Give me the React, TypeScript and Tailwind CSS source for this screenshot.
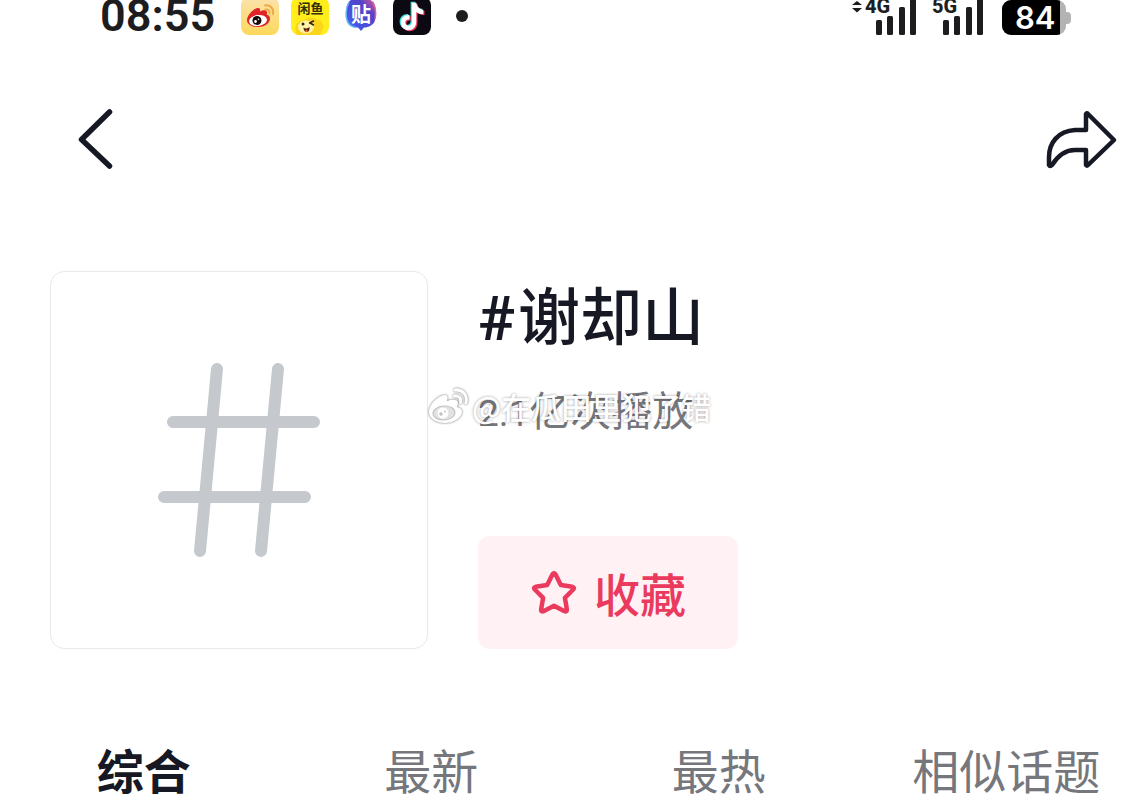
import React, { useState } from "react";

function WeiboIcon() {
  return (
    <svg viewBox="0 0 38 38" className="h-[38px] w-[38px]" aria-hidden="true">
      <defs>
        <linearGradient id="wb" x1="0" y1="0" x2="0" y2="1">
          <stop offset="0" stopColor="#fbe3ac" />
          <stop offset="1" stopColor="#fdd85a" />
        </linearGradient>
      </defs>
      <rect width="38" height="38" rx="8" fill="url(#wb)" />
      <path d="M6 23c0-5 7-12 11-12 2 0 2.500 1.500 2 3.500 3-1.500 7-2 7 1 0 1-.3 1.600-.3 2 2 .6 3.300 2 3.300 4 0 5-6 8.500-12 8.500S6 27.500 6 23z" fill="#e0232b" />
      <ellipse cx="17" cy="23.500" rx="9" ry="5.500" fill="#fff" transform="rotate(-8 17 23.500)" />
      <circle cx="16" cy="23.500" r="4.500" fill="#15090a" />
      <circle cx="14.500" cy="24.500" r="1.400" fill="#fff" />
      <circle cx="17.500" cy="22.300" r=".8" fill="#fff" />
      <path d="M24 8.500c5-1 9 3 8 8.500M24.500 12.500c3-.5 4.500 1.500 4 4" fill="none" stroke="#efa944" strokeWidth="2" strokeLinecap="round" />
    </svg>
  );
}

function XianyuIcon() {
  return (
    <svg viewBox="0 0 38 38" className="h-[38px] w-[38px]" aria-hidden="true">
      <rect width="38" height="38" rx="8" fill="#ffed1c" />
      <path d="M6 38c-4-8 0-15 7-15 4-3 10-3 13 0 5 0 7 5 6 8l-3 7z" fill="#fbd51c" />
      <ellipse cx="15" cy="30" rx="8" ry="6.500" fill="#fff4a8" />
      <text x="19.500" y="15.500" textAnchor="middle" fontSize="13" fontWeight="700" fill="#353008" fontFamily="'Noto Sans CJK SC', sans-serif">闲鱼</text>
      <circle cx="12" cy="27" r="1.500" fill="#302410" />
      <path d="M18.500 26l4-2M19 26l3.500 2" stroke="#302410" strokeWidth="1.500" strokeLinecap="round" />
      <path d="M12.500 30.500c2 1.500 4.500 1 6-.5.500 3-.8 5-2.800 5s-3.200-2-3.200-4.500z" fill="#53200d" />
      <circle cx="15.500" cy="34" r="1.200" fill="#f0632d" />
    </svg>
  );
}

function TiebaIcon() {
  return (
    <svg viewBox="0 0 32 38" className="h-[38px] w-[32px]" aria-hidden="true">
      <defs>
        <linearGradient id="tb" x1="0" y1="1" x2="1" y2="0">
          <stop offset="0" stopColor="#3ba4ff" />
          <stop offset=".25" stopColor="#4656e6" />
          <stop offset=".7" stopColor="#5242c8" />
          <stop offset="1" stopColor="#ed5b91" />
        </linearGradient>
      </defs>
      <path d="M9 2h13q8 1 8.500 10v9q-1 8-9.500 9.500h-2L16 34l-3-3.500h-2Q2 29 1.500 21v-9Q2 3 9 2z" fill="url(#tb)" />
      <path d="M4 5Q0 12 1.500 21q1 8 9 9.500" fill="none" stroke="#65b8ef" strokeWidth="1.500" />
      <path d="M28 5q4 8 2 17" fill="none" stroke="#e05fa0" strokeWidth="1.500" />
      <text x="16" y="25" textAnchor="middle" fontSize="20" fontWeight="700" fill="#fff" fontFamily="'Noto Sans CJK SC', sans-serif">贴</text>
    </svg>
  );
}

function DouyinIcon() {
  const note = "M18 5h4.500c.5 4 3 6.500 7 7v4.500c-2.700 0-5-.8-7-2.200V24c0 5-3.500 8.500-8 8.500S7 29 7 24.800c0-5 4-8 8.700-7.600v4.700c-2.500-.5-4.200.8-4.200 2.900 0 1.800 1.400 3.200 3.100 3.200 2 0 3.400-1.400 3.400-3.700z";
  return (
    <svg viewBox="0 0 38 38" className="h-[38px] w-[38px]" aria-hidden="true">
      <rect width="38" height="38" rx="8" fill="#0c0913" />
      <path d={note} fill="#3ddbd9" transform="translate(-.4 -.2)" />
      <path d={note} fill="#ee3a63" transform="translate(2 1.800)" />
      <path d={note} fill="#fff" transform="translate(.8 .8)" />
    </svg>
  );
}

function Signal({ label, arrows }: { label: string; arrows?: boolean }) {
  return (
    <svg viewBox="0 0 66 38" className="h-[38px] w-[66px]" role="img" aria-label={label}>
      {arrows && <path d="M0 5h10L5 1zM0 8h10L5 12.500z" fill="#1d1d1f" />}
      <text x="13" y="13" fontSize="20" fontWeight="800" fill="#1d1d1f" fontFamily="Roboto, sans-serif">{label}</text>
      <g fill="#1d1d1f">
        <rect x="24" y="20" width="6" height="15" rx="1.500" />
        <rect x="35" y="16" width="6" height="19" rx="1.500" />
        <rect x="47" y="7" width="6" height="28" rx="1.500" />
        <rect x="58" y="-2" width="6" height="37" rx="1.500" />
      </g>
    </svg>
  );
}

function StatusBar() {
  return (
    <div className="flex h-[38px] items-end justify-between pr-[69px] pl-[100px] text-[#1d1d1f]">
      <div className="flex h-[38px] items-start">
        <time className="w-[141px] font-[Roboto,sans-serif] text-[45px] leading-[32px] font-semibold">08:55</time>
        <div className="-mt-[3px] flex items-center">
          <WeiboIcon />
          <span className="ml-3 flex"><XianyuIcon /></span>
          <span className="ml-4 flex"><TiebaIcon /></span>
          <span className="ml-4 flex"><DouyinIcon /></span>
          <span className="ml-[25px] h-3 w-3 rounded-full bg-[#1d1d1f]" />
        </div>
      </div>
      <div className="flex h-[38px] items-start">
        <Signal label="4G" arrows />
        <span className="ml-px flex"><Signal label="5G" /></span>
        <div className="ml-[17px] flex items-center" aria-label="电量 84%">
          <div className="flex h-[35px] w-[64px] overflow-hidden rounded-[9px] bg-[#b3b3b3]">
            <span className="w-[58px] bg-black pl-[13px] font-[Inter,sans-serif] text-[31px] leading-[36px] font-semibold text-white">84</span>
          </div>
          <span className="h-3 w-[5px] rounded-r-[4px] bg-[#b3b3b3]" />
        </div>
      </div>
    </div>
  );
}

function Watermark() {
  return (
    <div className="pointer-events-none absolute top-[3px] -left-[52px] flex items-center gap-[2px] whitespace-nowrap">
      <svg viewBox="0 0 44 38" className="h-[38px] w-[44px] drop-shadow-[0_0_1px_rgba(0,0,0,0.6)]" aria-hidden="true">
        <path d="M3 25C3 17 13 8 19 8c3 0 3 3 2 6 5-2 11-2 11 2l-1 4c4 1 5 3 5 5 0 6-9 11-17 11S3 32 3 25z" fill="#fff" />
        <ellipse cx="18" cy="26" rx="11" ry="7" fill="#e2e2e2" stroke="#c0c0c0" strokeWidth="1" transform="rotate(-4 18 26)" />
        <circle cx="17" cy="26" r="5.500" fill="#fff" />
        <circle cx="15" cy="27" r="1.700" fill="#c0c0c0" />
        <circle cx="19" cy="24.500" r=".9" fill="#c0c0c0" />
        <path d="M29 3c7-1 13 5 11 13M28.500 9c4-.5 7 2 6 6.500" fill="none" stroke="#fff" strokeWidth="3" strokeLinecap="round" />
      </svg>
      <span className="text-[30px] leading-[38px] font-medium text-white [text-shadow:0_0_3px_rgba(0,0,0,0.4)]">@在瓜田里犯了错</span>
    </div>
  );
}

const tabs = ["综合", "最新", "最热", "相似话题"];

export default function App() {
  const [active, setActive] = useState(0);
  const [saved, setSaved] = useState(false);
  return (
    <div className="min-h-screen overflow-hidden bg-white font-['Noto_Sans_CJK_SC',sans-serif] text-[#161823]">
      <StatusBar />
      <nav className="mt-[68px] flex items-center justify-between pr-5 pl-[75px]">
        <button type="button" aria-label="返回" className="flex">
          <svg viewBox="0 0 40 68" className="h-[68px] w-10" fill="none" stroke="#161823" strokeWidth="5.500" strokeLinecap="round" strokeLinejoin="round">
            <path d="M34.500 6L6.500 33.500l28 26.500" />
          </svg>
        </button>
        <button type="button" aria-label="分享" className="flex">
          <svg viewBox="0 0 76 68" className="h-[68px] w-[76px]" fill="none" stroke="#161823" strokeWidth="4.500" strokeLinejoin="round">
            <path d="M42 8v16H31C14 25 5 37 5 51v8q1 2 3 0C15 48 22 44 31 44h11v15q1 1 2 0L70 34 44 8q-1-1-2 0z" />
          </svg>
        </button>
      </nav>

      <main>
        <section className="mt-[97px] flex gap-[50px] px-[50px]">
          <div className="flex h-[378px] w-[378px] shrink-0 items-center justify-center rounded-[14px] border border-[#e9e9ea]">
            <svg viewBox="0 0 166 198" className="h-[198px] w-[166px]" fill="none" stroke="#c5c9ce" strokeWidth="12" strokeLinecap="round" aria-hidden="true">
              <path d="M61 8L44 190M122 8l-17 182M17 61h141M8 136h141" />
            </svg>
          </div>
          <div className="flex min-w-0 flex-col items-start">
            <h1 className="mt-1 flex items-baseline gap-[3px] text-[62px] leading-[76px] font-medium"><span className="font-[Roboto,sans-serif] font-semibold">#</span>谢却山</h1>
            <div className="relative mt-[27px]">
              <p className="flex items-baseline text-[41px] leading-[48px] text-[#76777d]"><span className="font-[Roboto,sans-serif] text-[37px]">2.1</span>亿次播放</p>
              <Watermark />
            </div>
            <button
              type="button"
              aria-pressed={saved}
              onClick={() => setSaved(!saved)}
              className="mt-auto flex h-[113px] w-[260px] items-center justify-center gap-4 rounded-xl bg-[#fff1f4] pb-[2px] text-[46px] leading-[60px] font-medium text-[#ea3a5e]"
            >
              <svg viewBox="0 0 48 44" className="h-[44px] w-12" fill="none" stroke="currentColor" strokeWidth="4.500" strokeLinejoin="round" aria-hidden="true">
                <path d="M22.400 4.500q1.600-2.500 3.200 0l5.200 10.600 11.600 1.700q2.600.7.800 2.700l-8.300 8.300 2 11.700q0 2.500-2.400 1.700L24 35.800 13.500 41.200q-2.400.8-2.400-1.700l2-11.700-8.300-8.300q-1.800-2 .8-2.700l11.600-1.700z" />
              </svg>
              收藏
            </button>
          </div>
        </section>

        <div role="tablist" className="mt-[90px] -mr-[10px] grid grid-cols-4">
          {tabs.map((t, i) => (
            <button
              key={t}
              type="button"
              role="tab"
              aria-selected={i === active}
              onClick={() => setActive(i)}
              className={i === active ? "text-[47px] leading-[60px] font-bold text-[#161823]" : "text-[47px] leading-[60px] font-normal text-[#76777d]"}
            >
              {t}
            </button>
          ))}
        </div>
      </main>
    </div>
  );
}
